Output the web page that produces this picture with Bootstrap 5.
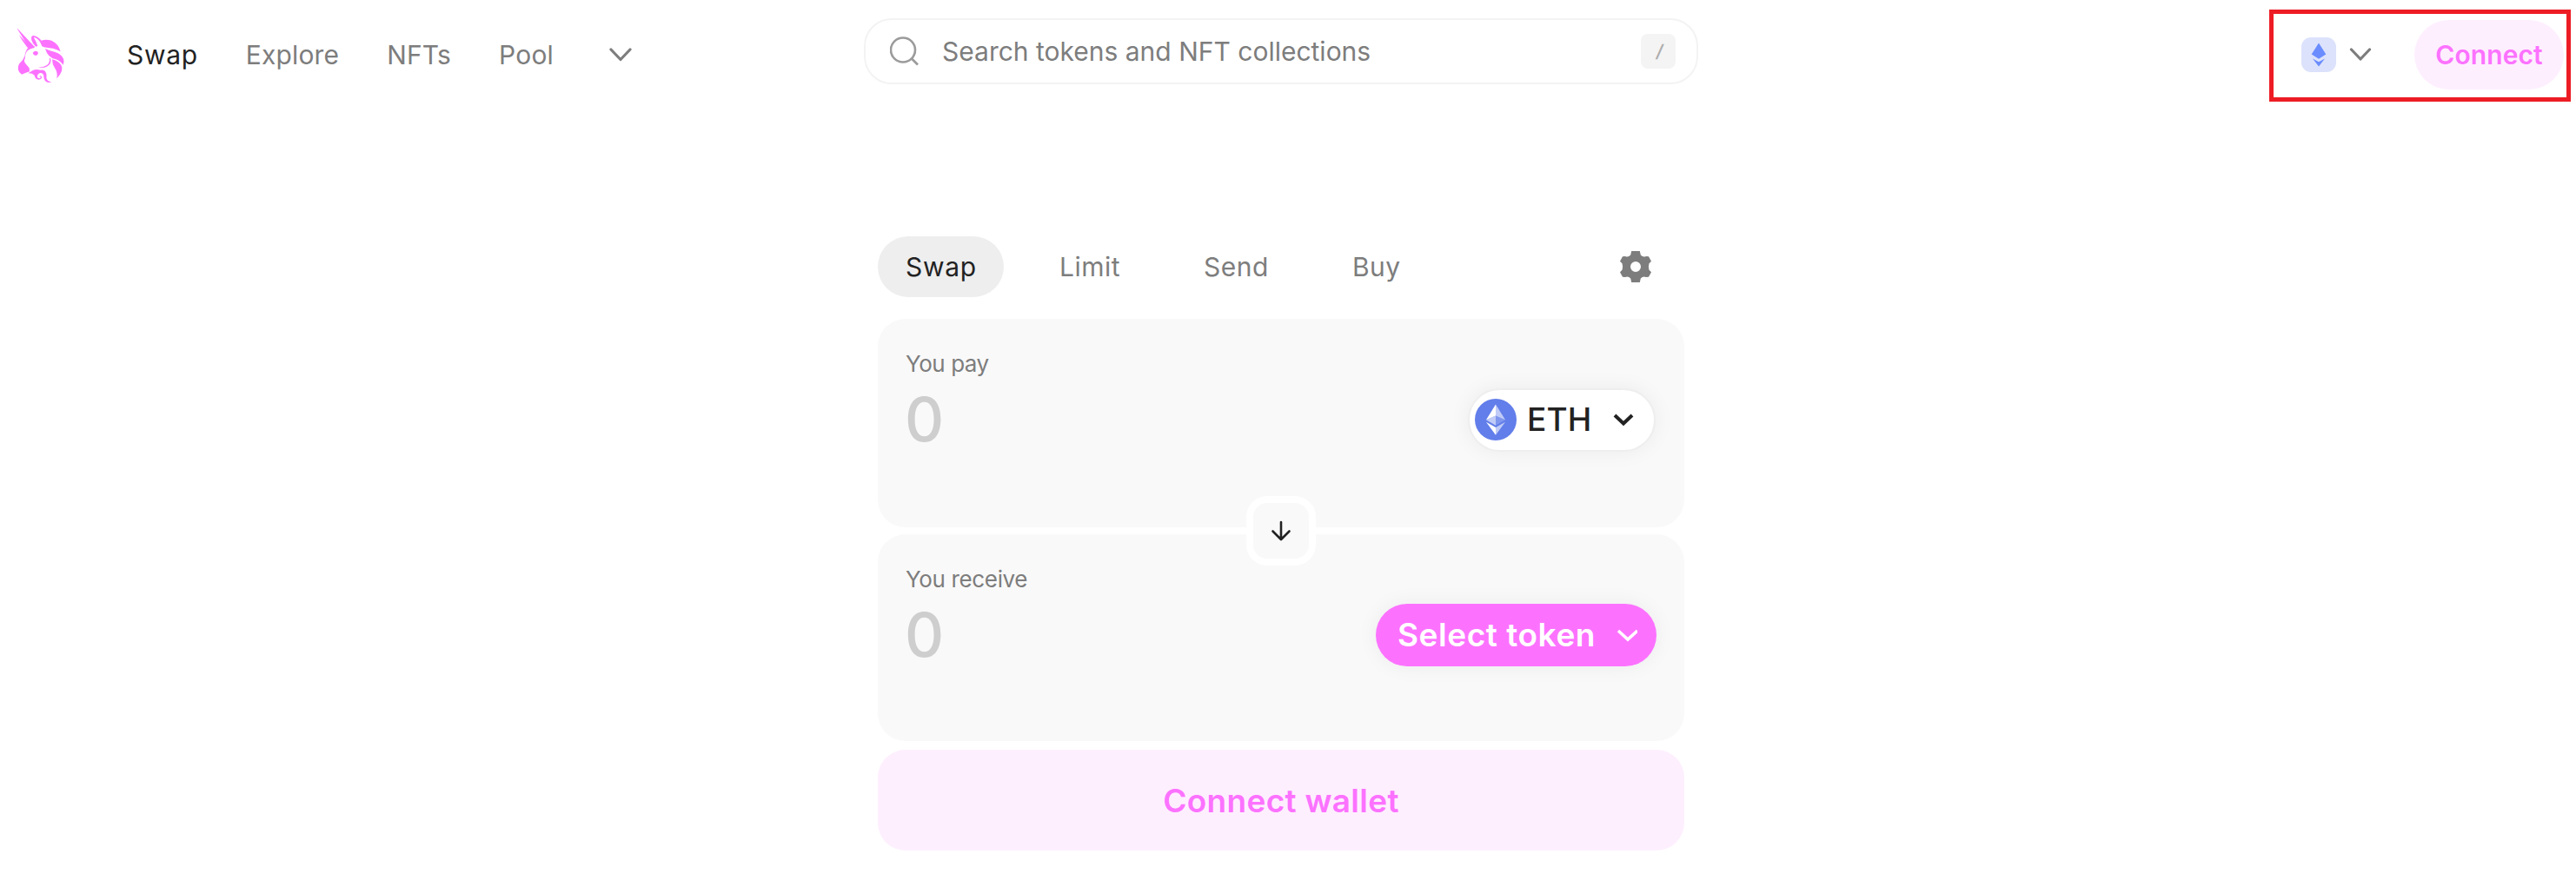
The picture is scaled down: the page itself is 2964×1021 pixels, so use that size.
<!DOCTYPE html>
<html lang="en">
<head>
<meta charset="utf-8">
<meta name="viewport" content="width=device-width, initial-scale=1">
<title>Swap</title>
<link rel="stylesheet" href="https://cdn.jsdelivr.net/npm/bootstrap@5.3.0/dist/css/bootstrap.min.css">
<style>
:root{--pink:#fc72ff;--pink-soft:#feefff;--ink:#222;--muted:#7d7d7d;--surface:#f9f9f9}
body{font-family:Inter,"Liberation Sans",sans-serif;background:#fff;color:var(--ink);font-size:30px;font-weight:400;line-height:40px;overflow:hidden}
svg{display:block;flex:none}
a{color:var(--muted);text-decoration:none;white-space:nowrap}
.topbar{height:126px}
.side-l{width:994px;padding-left:20px}
.logo{width:55px;height:66px;margin-right:71px}
.main-nav{gap:55px}
.main-nav a{letter-spacing:.15px}
.main-nav a.active,.tabs a.active{color:var(--ink);letter-spacing:.7px}
.nav-chev{margin-left:9px}
.search{width:960px;height:76px;margin-top:21px;border:2px solid #f3f3f3;border-radius:32px;padding:0 24px 0 28px;color:var(--muted)}
.search .ph{margin-left:26px}
.key{width:40px;height:40px;border-radius:8px;background:#f4f4f4;color:#adadad;font-size:20px;font-weight:600;padding-left:4px}
.slash{transform:skewX(-10deg)}
.side-r{width:1010px;padding:11px 6px 0 0}
.account{width:347px;height:106px;border:5px solid #ed1c24;padding:0 3px 2px 32px}
.chain{width:40px;height:40px;border-radius:11px;background:#dce2fb}
.chain-chev{margin-left:15px}
.connect{width:172px;height:80px;border-radius:40px;background:var(--pink-soft);color:var(--pink);font-weight:600;letter-spacing:.1px}
.swapbox{width:928px;margin:146px 0 0 1010px}
.tabs{height:70px;margin-bottom:25px;gap:32px}
.tabs a{height:70px;padding:0 32px;border-radius:35px;line-height:70px;letter-spacing:.5px}
.tabs a.active{background:#eee;width:145px}
.gear{margin-right:31px}
.pane{background:var(--surface);border-radius:32px;padding:32px 32px 0 32px}
.pay{height:240px}
.receive{height:238px;margin-top:8px;}
.lbl{font-size:26px;line-height:40px;color:var(--muted);letter-spacing:-.45px}
.receive .lbl{letter-spacing:-.35px}
.num{font-size:70px;line-height:72px;color:#cecece;margin-left:-1px;font-weight:500}
.amount{margin-top:8px;height:72px}
.eth{height:73px;width:216px;border:2px solid #eee;border-radius:37px;background:#fff;box-shadow:0 0 24px rgba(34,34,34,.06);padding-left:6px;font-size:37px;font-weight:500;margin-right:1px}
.eth .sym{margin:0 24px 0 12px;letter-spacing:.2px}
.select{height:72px;width:323px;border-radius:36px;background:var(--pink);color:#fff;box-shadow:0 0 24px rgba(34,34,34,.06);padding-left:25px;font-size:37px;font-weight:600;letter-spacing:.55px}
.flip{left:424px;top:204px;width:80px;height:80px;border:8px solid #fff;border-radius:24px;background:var(--surface)}
.cta{height:116px;margin-top:10px;padding-top:2px;border-radius:32px;background:var(--pink-soft);color:var(--pink);font-size:37px;font-weight:600;letter-spacing:.3px}
</style>
<script src="https://cdn.jsdelivr.net/npm/bootstrap@5.3.0/dist/js/bootstrap.bundle.min.js"></script>
</head>
<body>
<header class="topbar d-flex align-items-start">
  <div class="side-l h-100 d-flex align-items-center">
    <svg class="logo" viewBox="60 60 165 198" fill="#fc72ff" role="img" aria-label="Unicorn">
      <path d="M56 64L119 131Q112 132 106 139L100 134Z"/>
      <path d="M66 91L104 131L97 137Q74 108 66 91Z"/>
      <path d="M119 130Q104 131 94 138Q87 150 85 164Q81 176 68 188Q61 197 63 211Q65 222 75 227Q90 221 102 217L101 205Q94 196 87 188Q81 179 86 173Q87 152 96 144Q106 136 119 135Z"/>
      <path d="M109 109Q106 94 114 93Q131 95 143 110Q158 105 178 110Q203 122 209 148Q196 140 183 137Q158 136 145 130L139 116Q130 101 116 98Q124 111 130 129L124 131Q112 121 109 109Z"/>
      <path d="M156 138Q169 145 188 149Q211 155 219 173Q223 184 218 194Q208 180 193 175Q165 170 156 138Z"/>
      <path d="M180 175Q201 180 211 194Q222 213 196 241Q200 220 189 205Q180 192 180 175Z"/>
      <path d="M174 170Q180 190 161 200Q148 206 132 202Q151 203 162 195Q173 187 171 172Z"/>
      <path d="M113 152Q122 142 131 150Q134 155 127 161Q116 163 113 152Z"/>
      <path d="M97 223Q105 219 112 214Q124 207 139 212Q153 209 158 220Q162 228 160 237Q161 252 178 253Q164 259 155 248Q150 239 151 230Q148 220 138 222Q127 227 129 238Q136 243 141 238Q140 233 136 235Q138 229 144 235Q145 244 134 245Q121 243 119 230Q111 222 97 223Z"/>
    </svg>
    <nav class="main-nav d-flex align-items-center">
      <a class="active" href="#">Swap</a><a href="#">Explore</a><a href="#">NFTs</a><a href="#">Pool</a>
      <svg class="nav-chev" width="26" height="16" viewBox="0 0 26 16" fill="none" stroke="#7d7d7d" stroke-width="3.2" stroke-linecap="round" stroke-linejoin="round"><path d="M2 2L13 13.5L24 2"/></svg>
    </nav>
  </div>
  <div class="search d-flex align-items-center">
    <svg width="34" height="34" viewBox="0 0 34 34" fill="none" stroke="#9b9b9b" stroke-width="2.6"><circle cx="15" cy="15.5" r="14"/><path d="M25 25.5L32 32.5"/></svg>
    <span class="ph text-nowrap">Search tokens and NFT collections</span>
    <span class="key ms-auto d-flex align-items-center justify-content-center"><span class="slash">/</span></span>
  </div>
  <div class="side-r d-flex justify-content-end">
    <div class="account d-flex align-items-center">
      <span class="chain d-flex align-items-center justify-content-center">
        <svg width="18" height="28" viewBox="0 0 18 28" fill="#6a8cff"><path d="M9 .5L17.3 13.6L9 18.8L.7 13.6Z"/><path d="M2 18.4L9 22.2L16 18.4L9 27.5Z"/></svg>
      </span>
      <svg class="chain-chev" width="26" height="16" viewBox="0 0 26 16" fill="none" stroke="#7d7d7d" stroke-width="3.2" stroke-linecap="round" stroke-linejoin="round"><path d="M2.5 2L13 13L23.5 2"/></svg>
      <a class="connect ms-auto d-flex align-items-center justify-content-center" href="#">Connect</a>
    </div>
  </div>
</header>

<main class="swapbox">
  <div class="tabs d-flex align-items-center">
    <a class="active" href="#">Swap</a><a href="#">Limit</a><a href="#">Send</a><a href="#">Buy</a>
    <svg class="gear ms-auto" width="50" height="36" viewBox="-25 -18 50 36" fill="#7d7d7d"><path fill-rule="evenodd" d="M-4.8 -18H4.8L5.8 -13.5Q8.5 -10.5 12 -12L15 -11.8L18 -6.3L15.5 -3.8Q14.2 0 15.5 3.8L18 6.3L15 11.8L12 12Q8.5 10.5 5.8 13.5L4.8 18H-4.8L-5.8 13.5Q-8.5 10.5 -12 12L-15 11.8L-18 6.3L-15.5 3.8Q-14.2 0 -15.5 -3.8L-18 -6.3L-15 -11.8L-12 -12Q-8.5 -10.5 -5.8 -13.5ZM0 -6A6 6 0 1 0 0 6A6 6 0 1 0 0 -6Z"/></svg>
  </div>
  <div class="position-relative">
    <section class="pane pay">
      <div class="lbl">You pay</div>
      <div class="amount d-flex align-items-center justify-content-between">
        <span class="num">0</span>
        <div class="eth d-flex align-items-center">
          <svg width="48" height="48" viewBox="0 0 48 48"><circle cx="24" cy="24" r="24" fill="#627eea"/><path d="M24 6.5V19.4L35 24.3Z" fill="#fff" fill-opacity=".6"/><path d="M24 6.5L13 24.3L24 19.4Z" fill="#fff"/><path d="M24 33.1V41.8L35 26.8Z" fill="#fff" fill-opacity=".6"/><path d="M24 41.8V33.1L13 26.8Z" fill="#fff"/><path d="M24 30.8L35 24.3L24 19.4Z" fill="#fff" fill-opacity=".2"/><path d="M13 24.3L24 30.8V19.4Z" fill="#fff" fill-opacity=".6"/></svg>
          <span class="sym">ETH</span>
          <svg width="24" height="15" viewBox="0 0 24 15" fill="none" stroke="#222" stroke-width="4"><path d="M2 2L12 11.5L22 2"/></svg>
        </div>
      </div>
    </section>
    <section class="pane receive">
      <div class="lbl">You receive</div>
      <div class="amount d-flex align-items-center justify-content-between">
        <span class="num">0</span>
        <div class="select d-flex align-items-center">
          <span class="text-nowrap me-4">Select token</span>
          <svg width="24" height="15" viewBox="0 0 24 15" fill="none" stroke="#fff" stroke-width="3.6"><path d="M2 2L13 12L24 2"/></svg>
        </div>
      </div>
    </section>
    <div class="flip position-absolute d-flex align-items-center justify-content-center">
      <svg width="24" height="24" viewBox="0 0 24 24" fill="none" stroke="#222" stroke-width="2.6" stroke-linecap="round" stroke-linejoin="round"><path d="M12 2V22M2.5 12.5L12 22L21.5 12.5"/></svg>
    </div>
  </div>
  <div class="cta d-flex align-items-center justify-content-center">Connect wallet</div>
</main>
</body>
</html>
